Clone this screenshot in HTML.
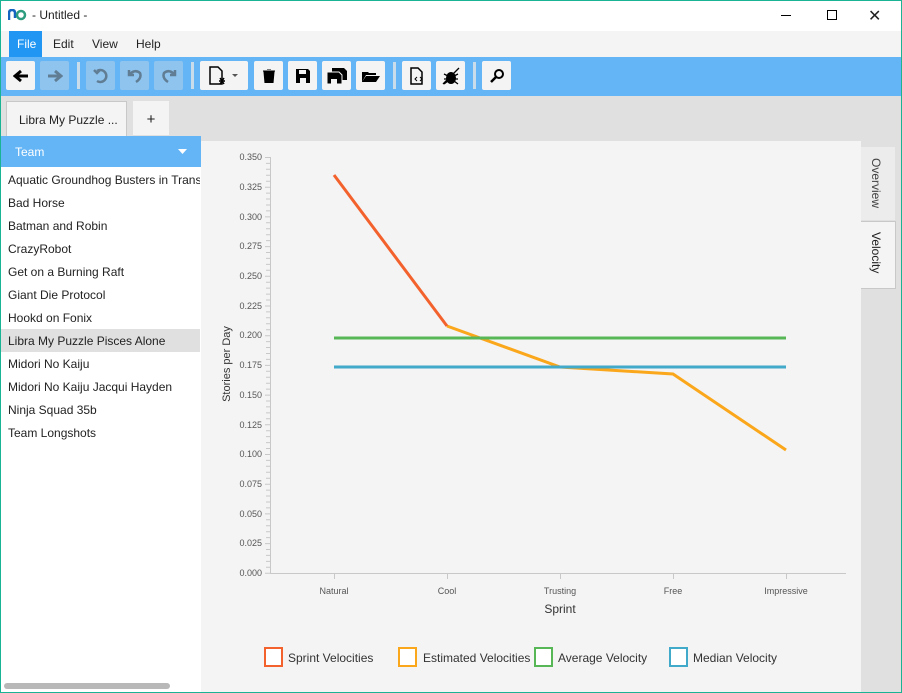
<!DOCTYPE html>
<html><head><meta charset="utf-8"><style>
*{margin:0;padding:0;box-sizing:border-box}
body{width:902px;height:693px;overflow:hidden;font-family:"Liberation Sans",sans-serif;font-size:12px;color:#222;background:#e0e0e0;position:relative}
.abs{position:absolute}
.btn{position:absolute;top:61px;width:29px;height:29px;background:#f4f4f4;border-radius:2px;display:flex;align-items:center;justify-content:center}
.dis{background:#8fc4ee}
.sep{position:absolute;top:62px;width:3px;height:27px;background:#c9dcea}
.li{position:absolute;left:8px;font-size:12px;color:#222}
</style></head><body>
<div class="abs" style="left:0;top:0;width:902px;height:693px;border:1px solid #1ab394;z-index:10;pointer-events:none"></div>
<div class="abs" style="left:0;top:0;width:902px;height:31px;background:#fff"></div>
<svg class="abs" style="left:8px;top:9px" width="20" height="12"><path d="M1 11 V4 Q1 1 4 1 Q7 1 7 4 V9" stroke="#1565c0" stroke-width="2.5" fill="none"/><circle cx="13" cy="6" r="4" stroke="#2e9c7f" stroke-width="2.5" fill="none"/></svg>
<div class="abs" style="left:32px;top:8px;font-size:12px">- Untitled -</div>
<div class="abs" style="left:781px;top:15px;width:10px;height:1px;background:#000"></div>
<div class="abs" style="left:827px;top:10px;width:10px;height:10px;border:1px solid #000"></div>
<div class="abs" style="left:868px;top:6px;font-size:16px">✕</div>
<div class="abs" style="left:1px;top:31px;width:900px;height:26px;background:#f4f4f4"></div>
<div class="abs" style="left:9px;top:31px;width:33px;height:26px;background:#2196f3;color:#fff;padding:6px 0 0 8px">File</div>
<div class="abs" style="left:53px;top:37px">Edit</div>
<div class="abs" style="left:92px;top:37px">View</div>
<div class="abs" style="left:136px;top:37px">Help</div>
<div class="abs" style="left:1px;top:57px;width:900px;height:39px;background:#64b5f6"></div>
<div class="btn" style="left:6px"><svg width="16" height="14"><path d="M15 7H3M8 2L2 7L8 12" stroke="#000" stroke-width="3" fill="none"/></svg></div>
<div class="btn dis" style="left:40px"><svg width="16" height="14"><path d="M1 7H13M8 2L14 7L8 12" stroke="#607d94" stroke-width="3" fill="none"/></svg></div>
<div class="sep" style="left:77px"></div>
<div class="btn dis" style="left:86px"><svg width="16" height="16"><path d="M4 3A6 6 0 1 1 4 13M1 2L4 5L7 2" stroke="#607d94" stroke-width="2.5" fill="none"/></svg></div>
<div class="btn dis" style="left:120px"><svg width="16" height="16"><path d="M3 6Q8 1 13 5Q15 10 9 14M2 2V7H7" stroke="#607d94" stroke-width="2.5" fill="none"/></svg></div>
<div class="btn dis" style="left:154px"><svg width="16" height="16"><path d="M13 6Q8 1 3 5Q1 10 7 14M14 2V7H9" stroke="#607d94" stroke-width="2.5" fill="none"/></svg></div>
<div class="sep" style="left:191px"></div>
<div class="btn" style="left:200px;width:48px;justify-content:flex-start;padding-left:8px"><svg width="32" height="20"><path d="M2 1H10L14 5V18H2Z" stroke="#000" stroke-width="1.5" fill="none"/><path d="M12 12l4 6M16 12l-4 6M11 15h6" stroke="#000" stroke-width="1.5"/><path d="M24 8h6l-3 3z" fill="#555"/></svg></div>
<div class="btn" style="left:254px"><svg width="12" height="14"><path d="M0 2H12M4 0H8M1 3H11L10 14H2Z" stroke="#000" fill="#000"/></svg></div>
<div class="btn" style="left:288px"><svg width="14" height="14"><path d="M0 0H12L14 2V14H0Z" fill="#000"/><rect x="3" y="1" width="7" height="4" fill="#f4f4f4"/><rect x="4" y="9" width="6" height="5" fill="#f4f4f4"/></svg></div>
<div class="btn" style="left:322px"><svg width="20" height="16"><path d="M5 0H17L20 3V12H5Z" fill="#000"/><path d="M0 4H12L15 7V16H0Z" fill="#000" stroke="#f4f4f4"/><rect x="4" y="11" width="6" height="5" fill="#f4f4f4"/></svg></div>
<div class="btn" style="left:356px"><svg width="18" height="12"><path d="M0 2H6L7 3H14V5H4L0 12Z M4 6H18L14 12H0Z" fill="#000"/></svg></div>
<div class="sep" style="left:393px"></div>
<div class="btn" style="left:402px"><svg width="16" height="18"><path d="M2 1H9L13 5V17H2Z" stroke="#000" stroke-width="1.5" fill="none"/><path d="M8 10l-2 2 2 2M11 10l2 2-2 2" stroke="#000" fill="none"/></svg></div>
<div class="btn" style="left:436px"><svg width="18" height="18"><ellipse cx="9" cy="11" rx="5" ry="6" fill="#000"/><path d="M2 7l4 2M2 12h4M2 17l4-3M16 7l-4 2M16 12h-4M16 17l-4-3M17 1L1 17" stroke="#000" stroke-width="1.3"/></svg></div>
<div class="sep" style="left:473px"></div>
<div class="btn" style="left:482px"><svg width="14" height="14"><circle cx="9" cy="5" r="4" stroke="#000" stroke-width="2" fill="none"/><path d="M6 8L1 13" stroke="#000" stroke-width="2.5"/></svg></div>
<div class="abs" style="left:6px;top:101px;width:121px;height:36px;background:#f4f4f4;border:1px solid #c8c8c8;border-bottom:none;padding:11px 0 0 12px;font-size:12px">Libra My Puzzle ...</div>
<div class="abs" style="left:133px;top:101px;width:36px;height:34px;background:#f4f4f4;text-align:center;padding-top:10px;font-size:15px">+</div>
<div class="abs" style="left:1px;top:136px;width:200px;height:557px;background:#fff"></div>
<div class="abs" style="left:1px;top:136px;width:200px;height:31px;background:#64b5f6;color:#fff;padding:9px 0 0 14px">Team</div>
<svg class="abs" style="left:178px;top:149px" width="10" height="6"><path d="M0 0H9L4.5 5Z" fill="#fff"/></svg>
<div class="abs" style="left:1px;top:329px;width:199px;height:23px;background:#e0e0e0"></div>
<div class="li" style="top:173px;white-space:nowrap;width:192px;overflow:hidden">Aquatic Groundhog Busters in Transl</div>
<div class="li" style="top:196px">Bad Horse</div>
<div class="li" style="top:219px">Batman and Robin</div>
<div class="li" style="top:242px">CrazyRobot</div>
<div class="li" style="top:265px">Get on a Burning Raft</div>
<div class="li" style="top:288px">Giant Die Protocol</div>
<div class="li" style="top:311px">Hookd on Fonix</div>
<div class="li" style="top:334px">Libra My Puzzle Pisces Alone</div>
<div class="li" style="top:357px">Midori No Kaiju</div>
<div class="li" style="top:380px">Midori No Kaiju Jacqui Hayden</div>
<div class="li" style="top:403px">Ninja Squad 35b</div>
<div class="li" style="top:426px">Team Longshots</div>
<div class="abs" style="left:4px;top:683px;width:166px;height:6px;background:#b8b8b8;border-radius:3px"></div>
<div class="abs" style="left:201px;top:141px;width:660px;height:552px;background:#f4f4f4"></div>
<div class="abs" style="left:861px;top:147px;width:34px;height:73px;background:#ececec"></div>
<div class="abs" style="left:861px;top:221px;width:35px;height:68px;background:#f4f4f4;border:1px solid #c8c8c8;border-left:none"></div>
<div class="abs" style="left:869px;top:158px;writing-mode:vertical-rl;font-size:12px;color:#444">Overview</div>
<div class="abs" style="left:869px;top:232px;writing-mode:vertical-rl;font-size:12px;color:#222">Velocity</div>
<svg class="abs" style="left:0;top:0" width="902" height="693" font-family="Liberation Sans,sans-serif">
<g id="ax" stroke="#c8c8c8" stroke-width="1">
<line x1="270.5" y1="157" x2="270.5" y2="573"/>
<line x1="270" y1="573.5" x2="846" y2="573.5"/>
</g>
<g stroke="#c8c8c8">
<path d="M265 157.5h5M265 187.2h5M265 216.9h5M265 246.6h5M265 276.3h5M265 306h5M265 335.7h5M265 365.4h5M265 395.1h5M265 424.8h5M265 454.5h5M265 484.2h5M265 513.9h5M265 543.6h5M265 573.3h5"/>
<path d="M266 163.4h4M266 169.3h4M266 175.3h4M266 181.2h4M266 193.1h4M266 199h4M266 205h4M266 210.9h4M266 222.8h4M266 228.7h4M266 234.7h4M266 240.6h4M266 252.5h4M266 258.4h4M266 264.4h4M266 270.3h4M266 282.2h4M266 288.1h4M266 294.1h4M266 300h4M266 311.9h4M266 317.8h4M266 323.8h4M266 329.7h4M266 341.6h4M266 347.5h4M266 353.5h4M266 359.4h4M266 371.3h4M266 377.2h4M266 383.2h4M266 389.1h4M266 401h4M266 406.9h4M266 412.9h4M266 418.8h4M266 430.7h4M266 436.6h4M266 442.6h4M266 448.5h4M266 460.4h4M266 466.3h4M266 472.3h4M266 478.2h4M266 490.1h4M266 496h4M266 502h4M266 507.9h4M266 519.8h4M266 525.7h4M266 531.7h4M266 537.6h4M266 549.5h4M266 555.4h4M266 561.4h4M266 567.3h4"/>
<path d="M334.5 573v6M447.5 573v6M560.5 573v6M673.5 573v6M786.5 573v6"/>
</g>
<g font-size="9" fill="#555" text-anchor="end">
<text x="262" y="160">0.350</text><text x="262" y="190">0.325</text><text x="262" y="220">0.300</text><text x="262" y="249">0.275</text><text x="262" y="279">0.250</text><text x="262" y="309">0.225</text><text x="262" y="338">0.200</text><text x="262" y="368">0.175</text><text x="262" y="398">0.150</text><text x="262" y="428">0.125</text><text x="262" y="457">0.100</text><text x="262" y="487">0.075</text><text x="262" y="517">0.050</text><text x="262" y="546">0.025</text><text x="262" y="576">0.000</text>
</g>
<g font-size="9" fill="#555" text-anchor="middle">
<text x="334" y="594">Natural</text><text x="447" y="594">Cool</text><text x="560" y="594">Trusting</text><text x="673" y="594">Free</text><text x="786" y="594">Impressive</text>
</g>
<text x="560" y="613" font-size="12" fill="#333" text-anchor="middle">Sprint</text>
<text transform="translate(230 364) rotate(-90)" font-size="11" fill="#333" text-anchor="middle">Stories per Day</text>
<polyline points="447,326 560,367 673,374 786,450" stroke="#fba71b" stroke-width="3" fill="none"/>
<line x1="334" y1="338" x2="786" y2="338" stroke="#57b757" stroke-width="3"/>
<line x1="334" y1="367" x2="786" y2="367" stroke="#41a9c9" stroke-width="3"/>
<polyline points="334,175 447,326" stroke="#f3622d" stroke-width="3" fill="none"/>
<g stroke-width="2" fill="#fff">
<rect x="265" y="648" width="17" height="18" stroke="#f3622d"/>
<rect x="399" y="648" width="17" height="18" stroke="#fba71b"/>
<rect x="535" y="648" width="17" height="18" stroke="#57b757"/>
<rect x="670" y="648" width="17" height="18" stroke="#41a9c9"/>
</g>
<g font-size="12" fill="#333">
<text x="288" y="662">Sprint Velocities</text><text x="423" y="662">Estimated Velocities</text><text x="558" y="662">Average Velocity</text><text x="693" y="662">Median Velocity</text>
</g>
</svg>
</body></html>
